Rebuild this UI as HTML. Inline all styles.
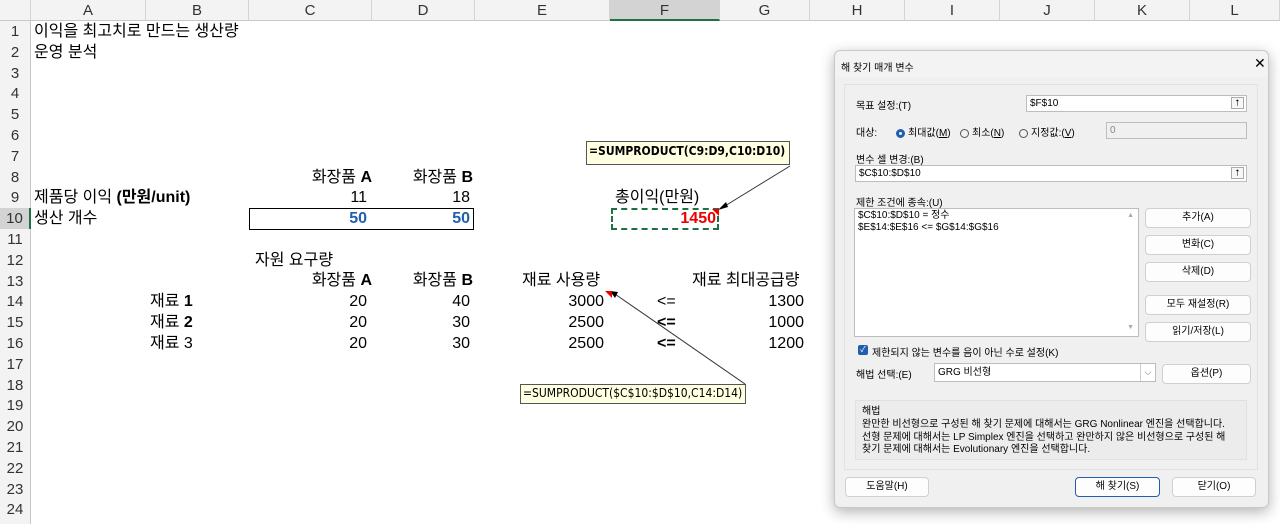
<!DOCTYPE html><html><head><meta charset="utf-8"><style>
body{margin:0;width:1280px;height:524px;overflow:hidden;background:#fff;font-family:"Liberation Sans","Noto Sans CJK KR",sans-serif;position:relative}
.a{position:absolute;white-space:nowrap}
.hdr{position:absolute;top:0;height:21px;background:#f3f3f3;border-bottom:1px solid #c8c8c8;font-size:15px;color:#333;text-align:center;line-height:21px;border-right:1px solid #d4d4d4;box-sizing:border-box}
.rh{position:absolute;left:0;width:31px;height:21px;line-height:21px;background:#f3f3f3;border-right:1px solid #c8c8c8;font-size:15px;color:#333;text-align:center;box-sizing:border-box}
.t{position:absolute;font-size:16px;color:#000;white-space:nowrap;line-height:20px}
.r{text-align:right}
.d{position:absolute;font-size:10px;color:#000;white-space:nowrap}
.btn{position:absolute;background:#fdfdfd;border:1px solid #d0d0d0;border-radius:4px;font-size:10px;text-align:center;line-height:18px;box-sizing:border-box}
.inp{position:absolute;background:#fff;border:1px solid #bdbdbd;box-sizing:border-box;font-size:10px;line-height:15px;padding-left:3px}
.up{position:absolute;right:2px;top:1px;width:13px;height:12px;border:1px solid #aaa;background:#f7f7f7;font-size:9px;line-height:11px;text-align:center;box-sizing:border-box}
.rad{display:inline-block;width:9px;height:9px;border:1px solid #555;border-radius:50%;vertical-align:-2px;margin-right:3px;box-sizing:border-box}
</style></head><body>
<div class="hdr" style="left:0;width:31px"></div>
<div class="hdr" style="left:31px;width:115px">A</div>
<div class="hdr" style="left:146px;width:103px">B</div>
<div class="hdr" style="left:249px;width:123px">C</div>
<div class="hdr" style="left:372px;width:103px">D</div>
<div class="hdr" style="left:475px;width:135px">E</div>
<div class="hdr" style="left:610px;width:110px;background:#d3d3d3;border-bottom:2px solid #1e7145">F</div>
<div class="hdr" style="left:720px;width:90px">G</div>
<div class="hdr" style="left:810px;width:95px">H</div>
<div class="hdr" style="left:905px;width:95px">I</div>
<div class="hdr" style="left:1000px;width:95px">J</div>
<div class="hdr" style="left:1095px;width:95px">K</div>
<div class="hdr" style="left:1190px;width:90px">L</div>
<div style="position:absolute;left:0;top:21px;width:31px;height:503px;background:#f3f3f3;border-right:1px solid #c8c8c8;box-sizing:border-box"></div>
<div class="rh" style="top:21px">1</div>
<div class="rh" style="top:41.8px">2</div>
<div class="rh" style="top:62.6px">3</div>
<div class="rh" style="top:83.4px">4</div>
<div class="rh" style="top:104.2px">5</div>
<div class="rh" style="top:125px">6</div>
<div class="rh" style="top:145.8px">7</div>
<div class="rh" style="top:166.6px">8</div>
<div class="rh" style="top:187.4px">9</div>
<div class="rh" style="top:208.2px;background:#d3d3d3;border-right:2px solid #1e7145">10</div>
<div class="rh" style="top:229px">11</div>
<div class="rh" style="top:249.8px">12</div>
<div class="rh" style="top:270.6px">13</div>
<div class="rh" style="top:291.4px">14</div>
<div class="rh" style="top:312.2px">15</div>
<div class="rh" style="top:333px">16</div>
<div class="rh" style="top:353.8px">17</div>
<div class="rh" style="top:374.6px">18</div>
<div class="rh" style="top:395.4px">19</div>
<div class="rh" style="top:416.2px">20</div>
<div class="rh" style="top:437px">21</div>
<div class="rh" style="top:457.8px">22</div>
<div class="rh" style="top:478.6px">23</div>
<div class="rh" style="top:499.4px">24</div>
<div class="t" style="left:34px;top:22px">이익을 최고치로 만드는 생산량</div>
<div class="t" style="left:34px;top:43px">운영 분석</div>
<div class="t r" style="left:260px;width:112px;top:168px">화장품 <b>A</b></div>
<div class="t r" style="left:380px;width:93px;top:168px">화장품 <b>B</b></div>
<div class="t" style="left:34px;top:188px">제품당 이익 <b>(만원/unit)</b></div>
<div class="t r" style="left:300px;width:67px;top:188px">11</div>
<div class="t r" style="left:400px;width:70px;top:188px">18</div>
<div class="t" style="left:615px;top:188px">총이익(만원)</div>
<div class="t" style="left:34px;top:209px">생산 개수</div>
<div style="position:absolute;left:249px;top:208px;width:225px;height:22px;border:1px solid #000;box-sizing:border-box"></div>
<div class="t r" style="left:300px;width:67px;top:209px;color:#1f5fad;font-weight:bold">50</div>
<div class="t r" style="left:400px;width:70px;top:209px;color:#1f5fad;font-weight:bold">50</div>
<div style="position:absolute;left:611px;top:208px;width:108px;height:22px;border:2px dashed #1e7145;box-sizing:border-box"></div>
<div class="t r" style="left:620px;width:96px;top:209px;color:#e00;font-weight:bold">1450</div>
<div class="t" style="left:255px;top:251px">자원 요구량</div>
<div class="t r" style="left:260px;width:112px;top:271px">화장품 <b>A</b></div>
<div class="t r" style="left:380px;width:93px;top:271px">화장품 <b>B</b></div>
<div class="t" style="left:522px;top:271px">재료 사용량</div>
<div class="t" style="left:692px;top:271px">재료 최대공급량</div>
<div class="t" style="left:150px;top:292px">재료 <b>1</b></div>
<div class="t" style="left:150px;top:313px">재료 <b>2</b></div>
<div class="t" style="left:150px;top:334px">재료 3</div>
<div class="t r" style="left:300px;width:67px;top:292px">20</div><div class="t r" style="left:400px;width:70px;top:292px">40</div>
<div class="t r" style="left:300px;width:67px;top:313px">20</div><div class="t r" style="left:400px;width:70px;top:313px">30</div>
<div class="t r" style="left:300px;width:67px;top:334px">20</div><div class="t r" style="left:400px;width:70px;top:334px">30</div>
<div class="t r" style="left:540px;width:64px;top:292px">3000</div><div class="t r" style="left:540px;width:64px;top:313px">2500</div><div class="t r" style="left:540px;width:64px;top:334px">2500</div>
<div class="t" style="left:657px;top:292px">&lt;=</div><div class="t" style="left:657px;top:313px;font-weight:bold">&lt;=</div><div class="t" style="left:657px;top:334px;font-weight:bold">&lt;=</div>
<div class="t r" style="left:740px;width:64px;top:292px">1300</div><div class="t r" style="left:740px;width:64px;top:313px">1000</div><div class="t r" style="left:740px;width:64px;top:334px">1200</div>
<div style="position:absolute;left:586px;top:141px;width:204px;height:24px;background:#ffffe1;border:1px solid #555;box-sizing:border-box;font-size:12px;font-weight:bold;padding:2px 0 0 2px;white-space:nowrap;overflow:hidden;font-family:'DejaVu Sans Condensed','Liberation Sans',sans-serif">=SUMPRODUCT(C9:D9,C10:D10)</div>
<div style="position:absolute;left:520px;top:384px;width:226px;height:20px;background:#ffffe1;border:1px solid #555;box-sizing:border-box;font-size:12px;padding:1px 0 0 2px;white-space:nowrap;overflow:hidden;font-family:'DejaVu Sans Condensed','Liberation Sans',sans-serif">=SUMPRODUCT($C$10:$D$10,C14:D14)</div>
<svg style="position:absolute;left:0;top:0" width="1280" height="524"><g stroke="#333" stroke-width="1"><line x1="790" y1="166" x2="720" y2="209"/><line x1="745" y1="384" x2="612" y2="292"/></g><polygon points="718,210 726,202 728,207" fill="#000"/><polygon points="610,291 618,292 615,298" fill="#000"/><polygon points="712,209 719,209 719,216" fill="#e00"/><polygon points="605,291 612,291 612,298" fill="#e00"/></svg>

<div style="position:absolute;left:834px;top:50px;width:435px;height:458px;background:#f0f0f0;border:1px solid #c8c8c8;border-radius:6px;box-shadow:0 4px 14px rgba(0,0,0,.3);box-sizing:border-box">
<div style="height:26px;background:#f3f3f3;border-radius:6px 6px 0 0"></div>
<div class="d" style="left:6px;top:8px">해 찾기 매개 변수</div>
<div class="a" style="left:419px;top:4px;font-size:14px">✕</div>
<div style="position:absolute;left:9px;top:33px;width:414px;height:386px;border:1px solid #e2e2e2;box-sizing:border-box"></div>
</div>
<div class="d" style="left:856px;top:97px">목표 설정:(T)</div>
<div class="inp" style="left:1026px;top:95px;width:221px;height:17px">$F$10<div class="up">⭡</div></div>
<div class="d" style="left:856px;top:124px">대상:</div>
<div class="d" style="left:896px;top:124px"><span class="rad" style="border:3px solid #1f5fad"></span>최대값(<u>M</u>)</div>
<div class="d" style="left:960px;top:124px"><span class="rad"></span>최소(<u>N</u>)</div>
<div class="d" style="left:1019px;top:124px"><span class="rad"></span>지정값:(<u>V</u>)</div>
<div class="inp" style="left:1106px;top:122px;width:141px;height:17px;background:#f0f0f0;color:#888">0</div>
<div class="d" style="left:856px;top:151px">변수 셀 변경:(B)</div>
<div class="inp" style="left:855px;top:165px;width:392px;height:17px">$C$10:$D$10<div class="up">⭡</div></div>
<div class="d" style="left:856px;top:194px">제한 조건에 종속:(U)</div>
<div class="inp" style="left:854px;top:208px;width:285px;height:129px;line-height:12px;padding-top:1px">$C$10:$D$10 = 정수<br>$E$14:$E$16 &lt;= $G$14:$G$16<div class="a" style="right:4px;top:1px;font-size:7px;color:#aaa">▲</div><div class="a" style="right:4px;bottom:2px;font-size:7px;color:#aaa">▼</div></div>
<div class="btn" style="left:1145px;top:208px;width:106px;height:20px">추가(A)</div>
<div class="btn" style="left:1145px;top:235px;width:106px;height:20px">변화(C)</div>
<div class="btn" style="left:1145px;top:262px;width:106px;height:20px">삭제(D)</div>
<div class="btn" style="left:1145px;top:295px;width:106px;height:20px">모두 재설정(R)</div>
<div class="btn" style="left:1145px;top:322px;width:106px;height:20px">읽기/저장(L)</div>
<div class="a" style="left:858px;top:345px;width:10px;height:10px;background:#1f5fad;border-radius:2px;color:#fff;font-size:8px;line-height:10px;text-align:center">✓</div>
<div class="d" style="left:872px;top:344px">제한되지 않는 변수를 음이 아닌 수로 설정(K)</div>
<div class="d" style="left:856px;top:366px">해법 선택:(E)</div>
<div class="inp" style="left:934px;top:363px;width:222px;height:19px;line-height:17px">GRG 비선형<div class="a" style="right:0;top:0;width:14px;height:17px;border-left:1px solid #ccc;text-align:center;color:#666;font-size:9px">⌵</div></div>
<div class="btn" style="left:1162px;top:364px;width:89px;height:20px">옵션(P)</div>
<div style="position:absolute;left:855px;top:400px;width:392px;height:60px;border:1px solid #e0e0e0;box-sizing:border-box;background:#ececec"></div>
<div class="d" style="left:862px;top:402px">해법</div>
<div class="d" style="left:862px;top:419px;line-height:12.5px">완만한 비선형으로 구성된 해 찾기 문제에 대해서는 GRG Nonlinear 엔진을 선택합니다.<br>선형 문제에 대해서는 LP Simplex 엔진을 선택하고 완만하지 않은 비선형으로 구성된 해<br>찾기 문제에 대해서는 Evolutionary 엔진을 선택합니다.</div>
<div class="btn" style="left:845px;top:477px;width:84px;height:20px">도움말(H)</div>
<div class="btn" style="left:1075px;top:477px;width:85px;height:20px;border-color:#1f5fad">해 찾기(S)</div>
<div class="btn" style="left:1172px;top:477px;width:84px;height:20px">닫기(O)</div>
</body></html>
